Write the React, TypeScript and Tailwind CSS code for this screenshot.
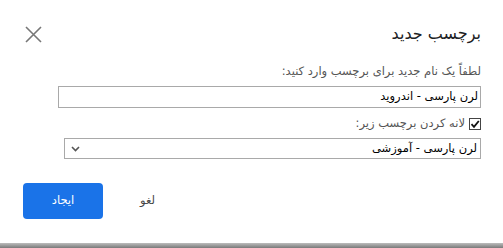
import { useState } from "react";

const font = { fontFamily: '"DejaVu Sans", "Liberation Sans", Arial, sans-serif' };

export default function App() {
  const [checked, setChecked] = useState(true);

  return (
    <div className="w-[503px] h-[248px] bg-white flex flex-col" style={font}>
      <div dir="rtl" className="flex-1 pr-[22px] pl-[23px]">
        <div className="flex items-center justify-between h-[34px] mt-[17px]">
          <h1 className="text-[16px] text-[#202124] font-normal">برچسب جدید</h1>
          <button className="w-[18px] h-[18px] flex items-center justify-center ml-[1px]">
            <svg width="17" height="17" viewBox="0 0 17 17" className="text-[#777]">
              <path d="M1 1L16 16M16 1L1 16" stroke="currentColor" strokeWidth="1.6" />
            </svg>
          </button>
        </div>

        <p className="mt-[12px] text-[11.5px] text-[#555] leading-[16px]">
          لطفاً یک نام جدید برای برچسب وارد کنید:
        </p>

        <div className="ml-[35px] mt-[7px] h-[22px] border border-[#a9a9a9] flex items-center px-[2px] text-[11.5px] text-black">
          لرن پارسی - اندروید
        </div>

        <label className="flex items-center gap-[4px] mt-[8px] h-[16px] text-[11.5px] text-[#555]">
          <span
            onClick={() => setChecked(!checked)}
            className="w-[12px] h-[12px] border border-[#444] flex items-center justify-center bg-white"
          >
            {checked && (
              <svg width="10" height="10" viewBox="0 0 10 10">
                <path d="M1.5 5.2L4 7.8L8.8 2" stroke="#111" strokeWidth="1.8" fill="none" />
              </svg>
            )}
          </span>
          لانه کردن برچسب زیر:
        </label>

        <div className="ml-[41px] mt-[6px] h-[21px] border border-[#a9a9a9] flex items-center justify-between px-[3px] text-[11.5px] text-black">
          <span>لرن پارسی - آموزشی</span>
          <svg width="9" height="6" viewBox="0 0 9 6" className="ml-[3px]">
            <path d="M1 1L4.5 4.5L8 1" stroke="#555" strokeWidth="1.6" fill="none" />
          </svg>
        </div>

        <div className="flex items-center justify-end mt-[24px] gap-[37px]">
          <button className="text-[11.5px] text-[#444]">لغو</button>
          <button className="w-[80px] h-[36px] rounded-[4px] bg-[#1a73e8] text-white text-[11.5px]">
            ایجاد
          </button>
        </div>
      </div>
      <div className="h-[5px] bg-gradient-to-b from-[#bdbdbd] to-[#7a7a7a]" />
    </div>
  );
}
